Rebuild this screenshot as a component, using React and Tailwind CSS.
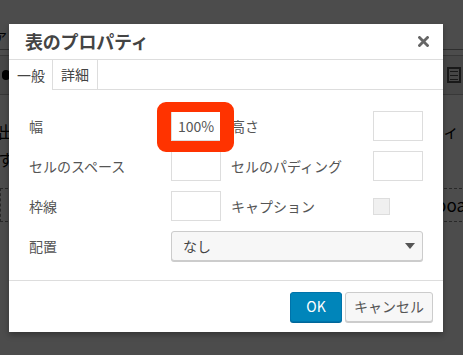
import React from 'react';

const jp = { fontFamily: '"Noto Sans CJK JP", "Noto Sans", sans-serif' };

function Field({ value }) {
  return (
    <div className="h-[30px] w-[50px] border border-[#dddddd] bg-white px-[6px] flex items-center text-[14px] text-[#555]">
      {value}
    </div>
  );
}

function Label({ children }) {
  return <div className="h-[30px] flex items-center text-[14px] text-[#555]">{children}</div>;
}

function BackPage() {
  // page under the modal, dimmed by the overlay
  return (
    <div className="absolute inset-0 bg-white text-black" style={jp}>
      <div className="h-[24px]" />
      <div className="h-[26px] border-b border-[#999] text-[13px] leading-[26px] ml-[-6px]">ア</div>
      <div className="h-[40px] mt-[5px] border-y border-[#bbb] bg-[#eeeeee] flex items-center justify-between px-[2px]">
        <div className="w-[8px] h-[10px] rounded-full bg-black" />
        <div className="w-[14px] h-[16px] border-2 border-[#555] flex flex-col justify-around px-[1px]">
          <div className="h-[1px] bg-[#555]" />
          <div className="h-[1px] bg-[#555]" />
          <div className="h-[1px] bg-[#555]" />
        </div>
      </div>
      <div className="mt-[22px] flex justify-between text-[16px] leading-[28px] ml-[-2px]">
        <div>
          <div>出</div>
          <div>す</div>
        </div>
        <div className="mr-[4px]">ィ</div>
      </div>
      <div className="mt-[15px] h-[34px] border border-dashed border-[#888] flex items-center justify-end text-[17px] mr-[-4px]">
        <span>ooa</span>
      </div>
    </div>
  );
}

export default function App() {
  return (
    <div className="relative w-[463px] h-[355px] overflow-hidden" style={jp}>
      <BackPage />
      <div className="absolute inset-0 bg-black/70" />

      <div className="absolute left-[9px] top-[24px] w-[434px] h-[308px] bg-white shadow-[0_3px_6px_rgba(0,0,0,0.3)] flex flex-col">
        <div className="h-[36px] flex items-center justify-between pl-[16px] pr-[14px] border-b border-[#dddddd]">
          <span className="text-[18px] font-bold text-[#444] tracking-[-0.2px]">表のプロパティ</span>
          <svg width="11" height="11" viewBox="0 0 11 11">
            <path d="M1.5 1.5 L9.5 9.5 M9.5 1.5 L1.5 9.5" stroke="#666" strokeWidth="2.8" strokeLinecap="square" />
          </svg>
        </div>

        <div className="h-[30px] flex text-[14px] text-[#444]">
          <div className="w-[44px] border-r border-[#dddddd] pl-[8px] flex items-center">一般</div>
          <div className="w-[45px] border-r border-b border-[#dddddd] pl-[8px] flex items-center">詳細</div>
          <div className="flex-1 border-b border-[#dddddd]" />
        </div>

        <div className="relative flex-1 pt-[21px] pl-[20px]">
          <div className="grid grid-cols-[142px_50px_10px_142px_50px] gap-y-[10px]">
            <Label>幅</Label>
            <Field value="100%" />
            <div />
            <Label>高さ</Label>
            <Field />

            <Label>セルのスペース</Label>
            <Field />
            <div />
            <Label>セルのパディング</Label>
            <Field />

            <Label>枠線</Label>
            <Field />
            <div />
            <Label>キャプション</Label>
            <div className="h-[30px] flex items-center">
              <div className="w-[17px] h-[17px] border border-[#dddddd] bg-[#f0f0f0]" />
            </div>

            <Label>配置</Label>
            <div className="col-span-4 h-[30px] border border-[#cccccc] rounded-[3px] bg-[#f7f7f7] shadow-[0_1px_0_#cccccc] flex items-center justify-between pl-[11px] pr-[7px] text-[14px] text-[#444]">
              <span>なし</span>
              <svg width="10" height="6" viewBox="0 0 10 6">
                <path d="M0 0 L10 0 L5 6 Z" fill="#555" />
              </svg>
            </div>
          </div>

          <div className="absolute left-[148px] top-[12px] w-[77px] h-[50px] border-[#ff3300] border-l-[14px] border-r-[14px] border-t-[10px] border-b-[11px] rounded-[9px]" />
        </div>

        <div className="h-[52px] border-t border-[#dddddd] flex items-center justify-end gap-[3px] pr-[10px]">
          <button className="h-[30px] w-[52px] rounded-[3px] bg-[#0085ba] border border-[#0073aa] shadow-[0_1px_0_#006799] text-white text-[14px]">OK</button>
          <button className="h-[30px] w-[88px] rounded-[3px] bg-[#f7f7f7] border border-[#cccccc] shadow-[0_1px_0_#cccccc] text-[#555] text-[14px]">キャンセル</button>
        </div>
      </div>
    </div>
  );
}
